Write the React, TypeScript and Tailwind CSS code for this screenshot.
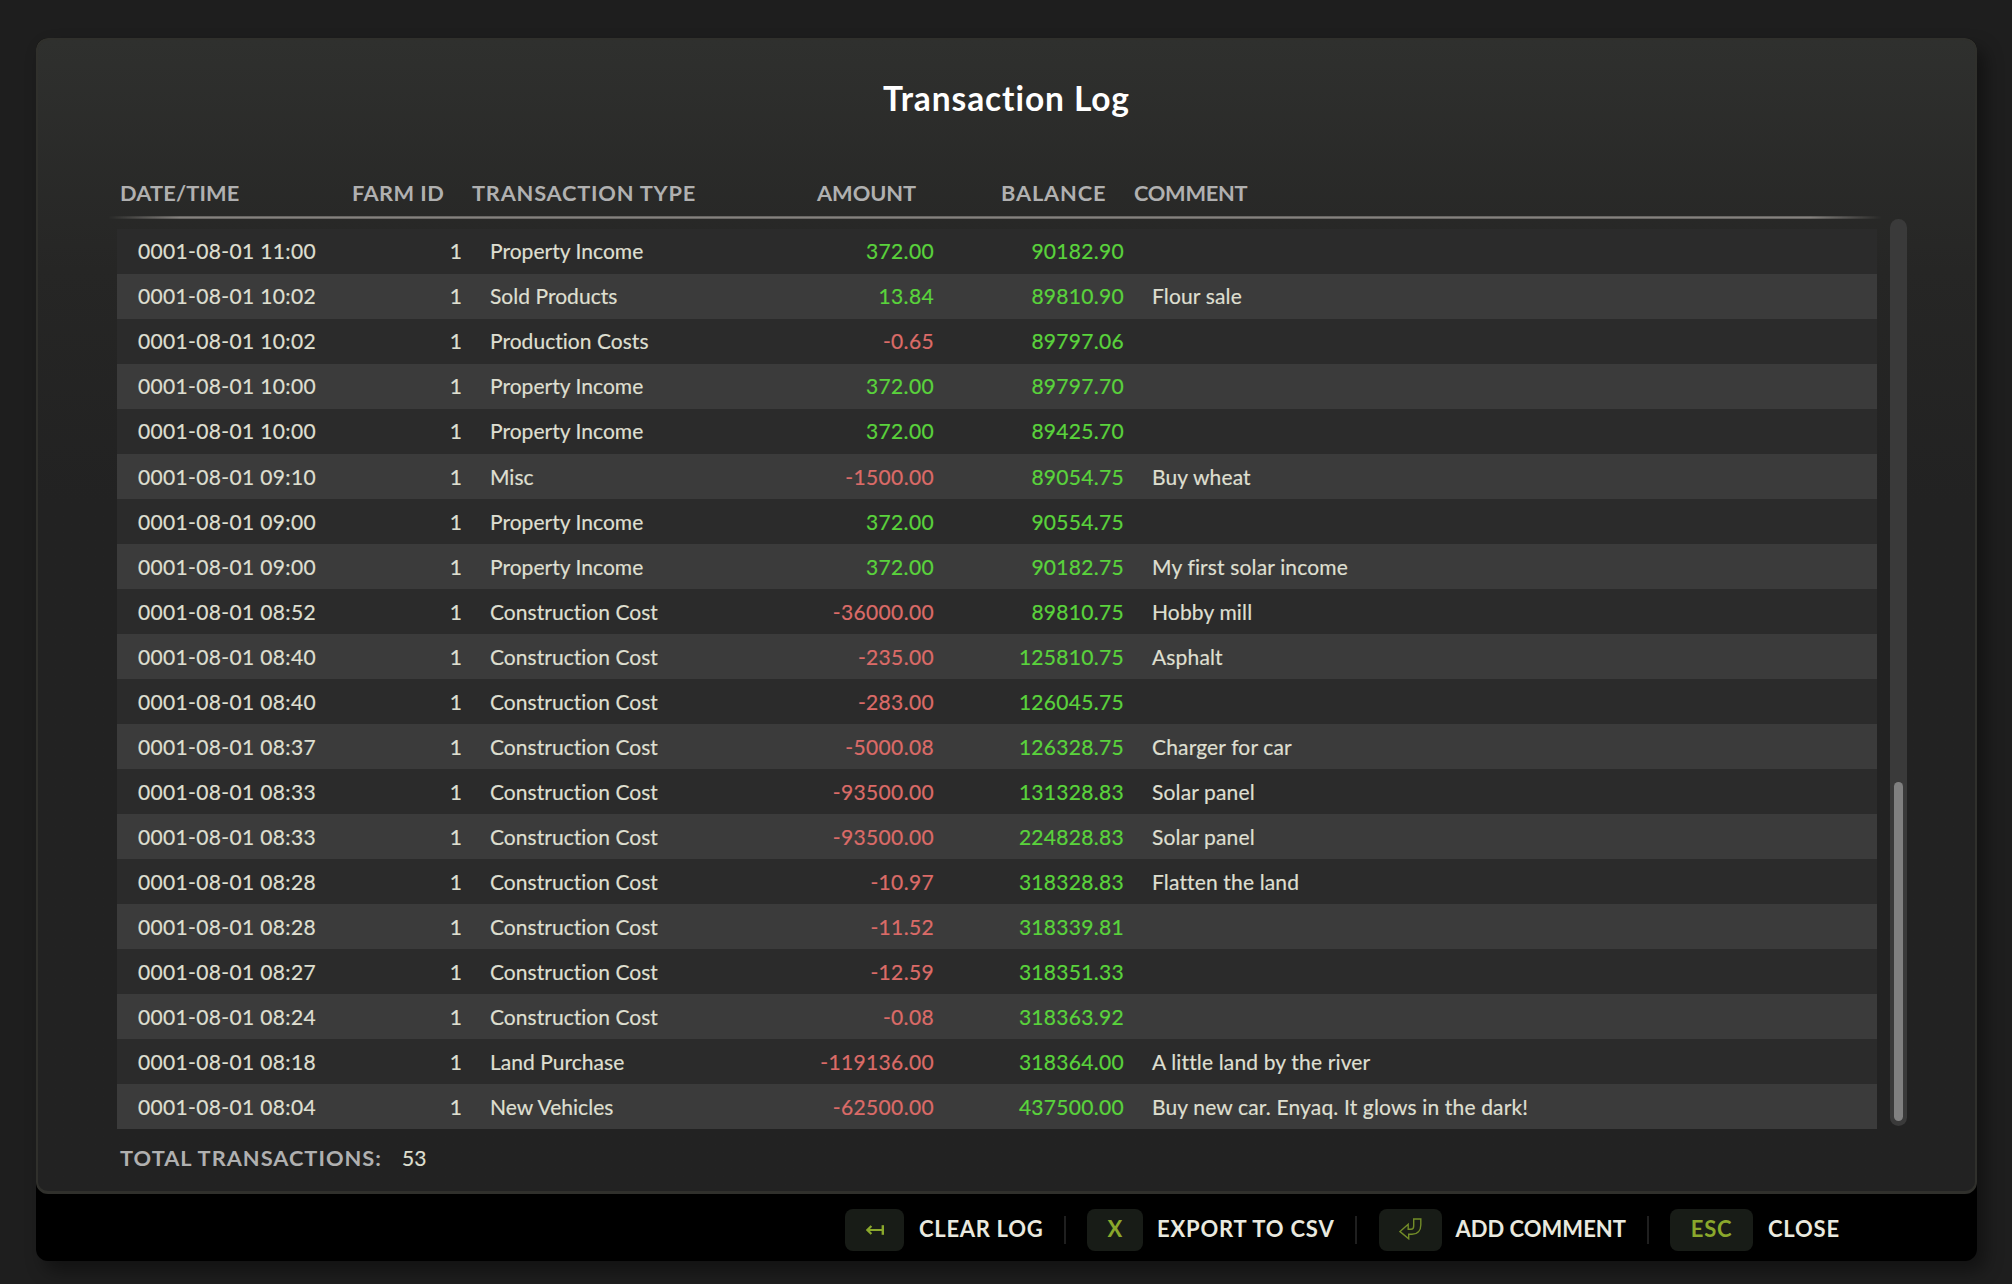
import React from "react";

type Row = [time: string, type: string, amount: string, balance: string, comment?: string];

const rows: Row[] = [
  ["11:00", "Property Income", "372.00", "90182.90"],
  ["10:02", "Sold Products", "13.84", "89810.90", "Flour sale"],
  ["10:02", "Production Costs", "-0.65", "89797.06"],
  ["10:00", "Property Income", "372.00", "89797.70"],
  ["10:00", "Property Income", "372.00", "89425.70"],
  ["09:10", "Misc", "-1500.00", "89054.75", "Buy wheat"],
  ["09:00", "Property Income", "372.00", "90554.75"],
  ["09:00", "Property Income", "372.00", "90182.75", "My first solar income"],
  ["08:52", "Construction Cost", "-36000.00", "89810.75", "Hobby mill"],
  ["08:40", "Construction Cost", "-235.00", "125810.75", "Asphalt"],
  ["08:40", "Construction Cost", "-283.00", "126045.75"],
  ["08:37", "Construction Cost", "-5000.08", "126328.75", "Charger for car"],
  ["08:33", "Construction Cost", "-93500.00", "131328.83", "Solar panel"],
  ["08:33", "Construction Cost", "-93500.00", "224828.83", "Solar panel"],
  ["08:28", "Construction Cost", "-10.97", "318328.83", "Flatten the land"],
  ["08:28", "Construction Cost", "-11.52", "318339.81"],
  ["08:27", "Construction Cost", "-12.59", "318351.33"],
  ["08:24", "Construction Cost", "-0.08", "318363.92"],
  ["08:18", "Land Purchase", "-119136.00", "318364.00", "A little land by the river"],
  ["08:04", "New Vehicles", "-62500.00", "437500.00", "Buy new car. Enyaq. It glows in the dark!"],
];

function Key({ className, children }: { className: string; children: React.ReactNode }) {
  return (
    <div className={`flex h-[42px] items-center justify-center rounded-lg bg-[#181c17] text-[22px] text-[#8aa82c] ${className}`}>
      {children}
    </div>
  );
}

function Divider() {
  return <div className="h-7 w-0.5 bg-[#1f1f1f]" />;
}

export default function App() {
  return (
    <div className="h-[1284px] w-[2012px] overflow-hidden bg-[#1e1e1e] px-9 pt-[38px] font-['Lato',sans-serif]">
      <div className="flex h-[1223px] w-[1941px] flex-col rounded-xl bg-black shadow-[8px_10px_18px_0px_rgba(0,0,0,0.4)]">
        <section className="flex h-[1156px] flex-col rounded-xl border-2 border-b-[3px] border-[#30302c] bg-linear-to-b from-[#2f302e] via-[#262625] via-20% to-[#222222] to-40%">
          <h1 className="mt-[37px] h-[42px] text-center text-[33.5px] leading-[42px] font-bold tracking-[0.9px] whitespace-nowrap text-white">
            Transaction Log
          </h1>

          <div className="mt-[60px] ml-[82px] flex h-7 items-center text-[21.8px] leading-7 font-bold whitespace-nowrap text-[#b0b0b0]">
            <div className="w-[232px] tracking-[0.15px]">DATE/TIME</div>
            <div className="w-[120px] tracking-[0.45px]">FARM ID</div>
            <div className="w-[345px] tracking-[0.78px]">TRANSACTION TYPE</div>
            <div className="w-[184px] tracking-[-0.05px]">AMOUNT</div>
            <div className="w-[133px] tracking-[0.85px]">BALANCE</div>
            <div className="tracking-[-0.3px]">COMMENT</div>
          </div>

          <div className="mt-[9px] ml-[70px] h-[3px] w-[1774px] bg-linear-to-b from-[#5c5a58] via-[#85827f] to-[#5c5a58] mask-l-from-96% mask-r-from-96%" />

          <div className="flex">
            <div className="mt-[9.5px] ml-[79px] w-[1760px] text-[21px] text-[#dedfd0] [-webkit-text-stroke:0.2px_currentColor]">
              {rows.map(([time, type, amount, balance, comment], i) => (
                <div
                  key={i}
                  className={`flex h-[45.05px] items-center pl-[21px] whitespace-nowrap ${i % 2 ? "bg-[#3b3b3b]" : "bg-[#2b2b2b]"}`}
                >
                  <div className="w-[200px] tracking-[0.35px]">0001-08-01 {time}</div>
                  <div className="w-[124px] text-right">1</div>
                  <div className="ml-7 w-[244px] tracking-[0.03px]">{type}</div>
                  <div className={`w-[200px] text-right tracking-[0.35px] ${amount.startsWith("-") ? "text-[#db6b68]" : "text-[#5ad33c]"}`}>{amount}</div>
                  <div className="w-[190px] text-right tracking-[0.3px] text-[#5ad33c]">{balance}</div>
                  <div className="ml-7 tracking-[0.15px]">{comment}</div>
                </div>
              ))}
            </div>
            <div className="ml-[13px] flex h-[907px] w-[17px] items-end justify-center rounded-full bg-[#3a3a3a] pb-[5px]">
              <div className="h-[339px] w-[9px] rounded-full bg-[#808080]" />
            </div>
          </div>

          <div className="mt-[10.5px] ml-[82px] flex h-9 items-center whitespace-nowrap">
            <div className="w-[282px] text-[21.8px] font-bold tracking-[1px] text-[#b0b0b0]">TOTAL TRANSACTIONS:</div>
            <div className="text-[21px] text-[#dedfd0] [-webkit-text-stroke:0.2px_currentColor]">53</div>
          </div>
        </section>

        <footer className="flex h-[67px] items-center pt-[5px] pl-[809px] text-[22px] leading-8 font-bold whitespace-nowrap text-[#e9e9df]">
          <Key className="w-[59px]">
            <svg width="18" height="10" viewBox="0 0 18 10" fill="none" stroke="currentColor">
              <path strokeWidth="2" d="M1.5 5H17" />
              <path strokeWidth="2.4" d="M16.8 0.2V9.8" />
              <path strokeWidth="2.2" d="M5.4 0.9L1.4 5L5.4 9.1" />
            </svg>
          </Key>
          <div className="ml-[15px] w-[145px] pb-0.5 tracking-[0.7px]">CLEAR LOG</div>
          <Divider />
          <Key className="ml-[21px] w-14 pb-0.5">X</Key>
          <div className="ml-3.5 w-[198px] pb-0.5 tracking-[0.8px]">EXPORT TO CSV</div>
          <Divider />
          <Key className="ml-[21.5px] w-[63px]">
            <svg className="mb-[3px]" width="23" height="22" viewBox="0 0 23 22" fill="none" stroke="#728c28" strokeWidth="1.4">
              <path d="M14.7 1H21.8V7C21.8 12.5 18.5 16.3 13 16.3H9.7V20.8L1 13.6L9.2 6.3V11.2H12C14 11.2 14.7 10 14.7 8Z" />
            </svg>
          </Key>
          <div className="ml-3.5 w-[191.5px] pb-0.5">ADD COMMENT</div>
          <Divider />
          <Key className="ml-[21px] w-[83px] pb-0.5 tracking-[0.7px]">ESC</Key>
          <div className="ml-[15px] pb-0.5 tracking-[0.8px]">CLOSE</div>
        </footer>
      </div>
    </div>
  );
}
